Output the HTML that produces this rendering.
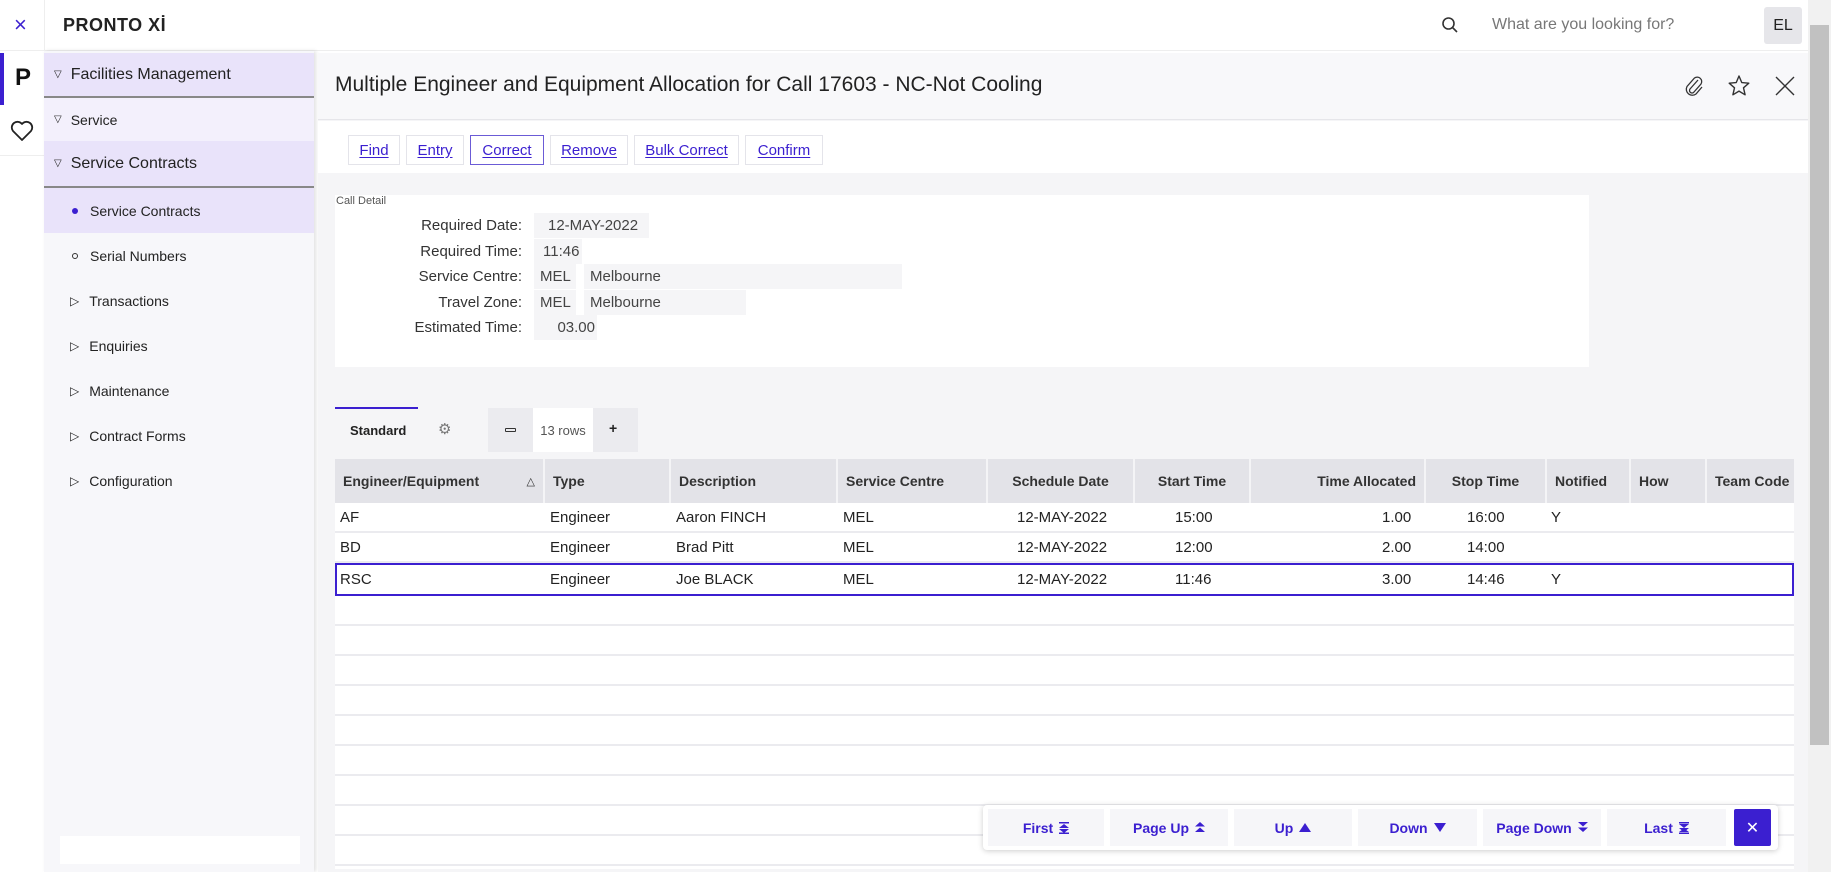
<!DOCTYPE html>
<html><head><meta charset="utf-8"><style>
*{box-sizing:border-box;margin:0;padding:0}
body{width:1831px;height:872px;overflow:hidden;background:#fff;font-family:"Liberation Sans",sans-serif;color:#222;position:relative}
.a{position:absolute}
.side div{position:absolute;left:0;width:270px;font-size:14px;display:flex;align-items:center}
.btn{position:absolute;top:135px;height:30px;border:1px solid #e4e4ea;background:#fff;color:#3b1fd0;font-size:15px;display:flex;align-items:center;justify-content:center;text-decoration:underline;text-underline-offset:2px}
.lbl{position:absolute;right:1309px;font-size:15px;color:#333;text-align:right;width:200px}
.val{position:absolute;height:25px;background:#f5f5f7;font-size:15px;color:#444;display:flex;align-items:center;padding-left:6px}
.th{position:absolute;top:459px;height:44px;background:#e3e3e8;font-size:14px;font-weight:bold;color:#333;display:flex;align-items:center;padding:0 8px;border-right:2px solid #f4f4f6;white-space:nowrap;overflow:hidden}
.row{position:absolute;left:335px;width:1459px;height:30px;border-bottom:2px solid #ebebef;background:#fff}
.c{position:absolute;font-size:15px;color:#222;top:6px}
.pg{position:absolute;top:809px;height:37px;background:#f6f6f9;color:#3b1fd0;font-size:14px;font-weight:bold;display:flex;align-items:center;justify-content:center;gap:6px}
.pg svg{display:block}
</style></head><body>
<!-- top bar -->
<div class="a" style="left:0;top:0;width:1808px;height:51px;border-bottom:1px solid #eee;background:#fff"></div>
<div class="a" style="left:14px;top:12px;font-size:22px;color:#3b1fd0">×</div>
<div class="a" style="left:44px;top:0;width:1px;height:872px;background:#eee"></div>
<div class="a" style="left:63px;top:15px;font-size:18px;font-weight:bold;letter-spacing:0.5px;color:#222">PRONTO Xİ</div>
<svg class="a" style="left:1441px;top:16px" width="18" height="18" viewBox="0 0 18 18"><circle cx="7.5" cy="7.5" r="5.5" fill="none" stroke="#333" stroke-width="1.6"/><line x1="11.5" y1="11.5" x2="16" y2="16" stroke="#333" stroke-width="1.6"/></svg>
<div class="a" style="left:1492px;top:16px;font-size:16px;color:#777">What are you looking for?</div>
<div class="a" style="left:1764px;top:7px;width:38px;height:37px;background:#e6e6ea;border-radius:3px;font-size:16px;display:flex;align-items:center;justify-content:center">EL</div>
<!-- scrollbar -->
<div class="a" style="left:1808px;top:0;width:23px;height:872px;background:#f1f1f1"></div>
<div class="a" style="left:1810px;top:25px;width:19px;height:720px;background:#c1c1c1"></div>
<!-- left icons -->
<div class="a" style="left:0;top:53px;width:4px;height:52px;background:#3b1fd0"></div>
<div class="a" style="left:15px;top:64px;font-size:24px;font-weight:bold;color:#111">P</div>
<svg class="a" style="left:10px;top:120px" width="24" height="22" viewBox="0 0 24 22"><path d="M12 20 L3 11 A5 5 0 0 1 12 4 A5 5 0 0 1 21 11 Z" fill="none" stroke="#222" stroke-width="1.8" stroke-linejoin="round"/></svg>
<div class="a" style="left:0;top:155px;width:44px;height:1px;background:#eee"></div>
<!-- sidebar -->
<div class="a side" style="left:44px;top:51px;width:270px;height:821px;background:#f7f7fa;box-shadow:2px 0 4px rgba(0,0,0,0.12)">
<div style="top:2px;height:45px;background:#e9e3fa;border-bottom:2px solid #888;font-size:16px;padding-left:10px"><span style="font-size:10px;margin-right:9px">▽</span>Facilities Management</div>
<div style="top:47px;height:43px;background:#f3f0fc;padding-left:10px"><span style="font-size:10px;margin-right:9px">▽</span>Service</div>
<div style="top:90px;height:47px;background:#e9e3fa;border-bottom:2px solid #888;font-size:16px;padding-left:10px"><span style="font-size:10px;margin-right:9px">▽</span>Service Contracts</div>
<div style="top:137px;height:45px;background:#e9e3fa;padding-left:28px"><span style="display:inline-block;width:6px;height:6px;border-radius:50%;background:#3b1fd0;margin-right:12px"></span>Service Contracts</div>
<div style="top:182px;height:45px;padding-left:28px"><span style="display:inline-block;width:6px;height:6px;border-radius:50%;border:1px solid #333;margin-right:12px"></span>Serial Numbers</div>
<div style="top:227px;height:45px;padding-left:26px"><span style="font-size:12px;margin-right:10px">▷</span>Transactions</div>
<div style="top:272px;height:45px;padding-left:26px"><span style="font-size:12px;margin-right:10px">▷</span>Enquiries</div>
<div style="top:317px;height:45px;padding-left:26px"><span style="font-size:12px;margin-right:10px">▷</span>Maintenance</div>
<div style="top:362px;height:45px;padding-left:26px"><span style="font-size:12px;margin-right:10px">▷</span>Contract Forms</div>
<div style="top:407px;height:45px;padding-left:26px"><span style="font-size:12px;margin-right:10px">▷</span>Configuration</div>
<div style="top:785px;left:16px;width:240px;height:28px;background:#fff"></div>
</div>
<!-- main -->
<div class="a" style="left:318px;top:53px;width:1490px;height:819px;background:#f5f5f7"></div>
<div class="a" style="left:318px;top:53px;width:1490px;height:67px;background:#f8f8fa;border-bottom:1px solid #e6e6ea"></div>
<div class="a" style="left:335px;top:73px;font-size:21px;color:#222">Multiple Engineer and Equipment Allocation for Call 17603 - NC-Not Cooling</div>
<svg class="a" style="left:1683px;top:74px" width="22" height="24" viewBox="0 0 22 24"><path d="M15 6 L7 15 A2.5 2.5 0 0 0 11 18 L18 10 A4.5 4.5 0 0 0 11.5 4 L4 12.5 A6 6 0 0 0 13 20 L19 13" fill="none" stroke="#333" stroke-width="1.3"/></svg>
<svg class="a" style="left:1727px;top:74px" width="24" height="23" viewBox="0 0 24 23"><path d="M12 2 L14.8 8.6 L21.8 9.2 L16.5 13.8 L18.1 20.8 L12 17.1 L5.9 20.8 L7.5 13.8 L2.2 9.2 L9.2 8.6 Z" fill="none" stroke="#333" stroke-width="1.4" stroke-linejoin="round"/></svg>
<svg class="a" style="left:1774px;top:75px" width="22" height="22" viewBox="0 0 22 22"><path d="M2 2 L20 20 M20 2 L2 20" stroke="#333" stroke-width="1.4"/></svg>
<div class="a" style="left:318px;top:121px;width:1490px;height:52px;background:#fff"></div>
<div class="btn" style="left:348px;width:52px">Find</div>
<div class="btn" style="left:406px;width:58px">Entry</div>
<div class="btn" style="left:470px;width:74px;border-color:#6b5bd6">Correct</div>
<div class="btn" style="left:550px;width:78px">Remove</div>
<div class="btn" style="left:634px;width:105px">Bulk Correct</div>
<div class="btn" style="left:745px;width:78px">Confirm</div>
<!-- call detail -->
<div class="a" style="left:335px;top:195px;width:1254px;height:172px;background:#fff"></div>
<div class="a" style="left:336px;top:195px;font-size:11px;color:#555">Call Detail</div>
<div class="lbl" style="top:217px">Required Date:</div>
<div class="lbl" style="top:243px">Required Time:</div>
<div class="lbl" style="top:268px">Service Centre:</div>
<div class="lbl" style="top:294px">Travel Zone:</div>
<div class="lbl" style="top:319px">Estimated Time:</div>
<div class="val" style="left:534px;top:213px;width:115px;padding-left:14px">12-MAY-2022</div>
<div class="val" style="left:534px;top:239px;width:48px;padding-left:9px">11:46</div>
<div class="val" style="left:534px;top:264px;width:42px">MEL</div>
<div class="val" style="left:584px;top:264px;width:318px;padding-left:6px">Melbourne</div>
<div class="val" style="left:534px;top:290px;width:42px">MEL</div>
<div class="val" style="left:584px;top:290px;width:162px;padding-left:6px">Melbourne</div>
<div class="val" style="left:534px;top:315px;width:63px;justify-content:flex-end;padding-right:2px">03.00</div>
<!-- tabs -->
<div class="a" style="left:335px;top:407px;width:83px;height:2px;background:#3b1fd0"></div>
<div class="a" style="left:350px;top:423px;font-size:13px;font-weight:bold">Standard</div>
<div class="a" style="left:438px;top:420px;font-size:15px;color:#777">⚙</div>
<div class="a" style="left:488px;top:408px;width:150px;height:44px;background:#ebebef"></div>
<div class="a" style="left:533px;top:408px;width:60px;height:44px;background:#fff;font-size:13px;color:#555;display:flex;align-items:center;justify-content:center">13 rows</div>
<div class="a" style="left:505px;top:428px;width:11px;height:4px;border:1px solid #333;border-radius:1px"></div>
<div class="a" style="left:609px;top:420px;font-size:14px;font-weight:bold">+</div>
<!-- table -->
<div class="a" style="left:335px;top:459px;width:1459px;height:410px;background:#fff"></div>
<div class="th" style="left:335px;width:210px;justify-content:space-between">Engineer/Equipment<span style="font-weight:normal;font-size:11px">△</span></div>
<div class="th" style="left:545px;width:126px">Type</div>
<div class="th" style="left:671px;width:167px">Description</div>
<div class="th" style="left:838px;width:150px">Service Centre</div>
<div class="th" style="left:988px;width:147px;justify-content:center">Schedule Date</div>
<div class="th" style="left:1135px;width:116px;justify-content:center">Start Time</div>
<div class="th" style="left:1251px;width:175px;justify-content:flex-end">Time Allocated</div>
<div class="th" style="left:1426px;width:121px;justify-content:center">Stop Time</div>
<div class="th" style="left:1547px;width:84px">Notified</div>
<div class="th" style="left:1631px;width:76px">How</div>
<div class="th" style="left:1707px;width:87px;border-right:0">Team Code</div>
<div class="row" style="top:503px"><span class="c" style="left:5px">AF</span><span class="c" style="left:215px">Engineer</span><span class="c" style="left:341px">Aaron FINCH</span><span class="c" style="left:508px">MEL</span><span class="c" style="left:682px">12-MAY-2022</span><span class="c" style="left:840px">15:00</span><span class="c" style="left:1047px">1.00</span><span class="c" style="left:1132px">16:00</span><span class="c" style="left:1216px">Y</span></div>
<div class="row" style="top:533px"><span class="c" style="left:5px">BD</span><span class="c" style="left:215px">Engineer</span><span class="c" style="left:341px">Brad Pitt</span><span class="c" style="left:508px">MEL</span><span class="c" style="left:682px">12-MAY-2022</span><span class="c" style="left:840px">12:00</span><span class="c" style="left:1047px">2.00</span><span class="c" style="left:1132px">14:00</span></div>
<div class="row" style="top:563px;height:33px;border:2px solid #3b1fd0"><span class="c" style="left:3px">RSC</span><span class="c" style="left:213px">Engineer</span><span class="c" style="left:339px">Joe BLACK</span><span class="c" style="left:506px">MEL</span><span class="c" style="left:680px">12-MAY-2022</span><span class="c" style="left:838px">11:46</span><span class="c" style="left:1045px">3.00</span><span class="c" style="left:1130px">14:46</span><span class="c" style="left:1214px">Y</span></div>
<div class="row" style="top:596px"></div><div class="row" style="top:626px"></div><div class="row" style="top:656px"></div><div class="row" style="top:686px"></div><div class="row" style="top:716px"></div><div class="row" style="top:746px"></div><div class="row" style="top:776px"></div><div class="row" style="top:806px"></div><div class="row" style="top:836px"></div>
<!-- pager -->
<div class="a" style="left:983px;top:805px;width:795px;height:45px;background:#fff;border-radius:4px;box-shadow:0 1px 6px rgba(0,0,0,0.2)"></div>
<div class="pg" style="left:988px;width:116px">First<svg width="10" height="12" viewBox="0 0 10 12"><rect x="0" y="0" width="10" height="1.5" fill="#3b1fd0"/><path d="M5 2 L10 6 L0 6Z M0 7 L10 7 L5 11Z" fill="#3b1fd0"/><rect x="0" y="10.5" width="10" height="1.5" fill="#3b1fd0"/></svg></div>
<div class="pg" style="left:1110px;width:118px">Page Up<svg width="10" height="11" viewBox="0 0 10 11"><path d="M5 0 L10 4.5 L0 4.5Z M5 5.5 L10 10 L0 10Z" fill="#3b1fd0"/></svg></div>
<div class="pg" style="left:1234px;width:118px">Up<svg width="12" height="9" viewBox="0 0 12 9"><path d="M6 0 L12 9 L0 9Z" fill="#3b1fd0"/></svg></div>
<div class="pg" style="left:1358px;width:119px">Down<svg width="12" height="9" viewBox="0 0 12 9"><path d="M0 0 L12 0 L6 9Z" fill="#3b1fd0"/></svg></div>
<div class="pg" style="left:1483px;width:118px">Page Down<svg width="10" height="11" viewBox="0 0 10 11"><path d="M0 0 L10 0 L5 4.5Z M0 5.5 L10 5.5 L5 10Z" fill="#3b1fd0"/></svg></div>
<div class="pg" style="left:1607px;width:119px">Last<svg width="10" height="12" viewBox="0 0 10 12"><rect x="0" y="0" width="10" height="1.5" fill="#3b1fd0"/><path d="M0 2 L10 2 L5 6Z M5 6.5 L10 10 L0 10Z" fill="#3b1fd0" transform="scale(1,1)"/><path d="M0 6 L10 6 L5 10Z" fill="#3b1fd0"/><rect x="0" y="10.5" width="10" height="1.5" fill="#3b1fd0"/></svg></div>
<div class="pg" style="left:1734px;width:37px;background:#3b1fd0;color:#fff;font-weight:normal;border-radius:2px;font-size:16px">✕</div>
</body></html>
